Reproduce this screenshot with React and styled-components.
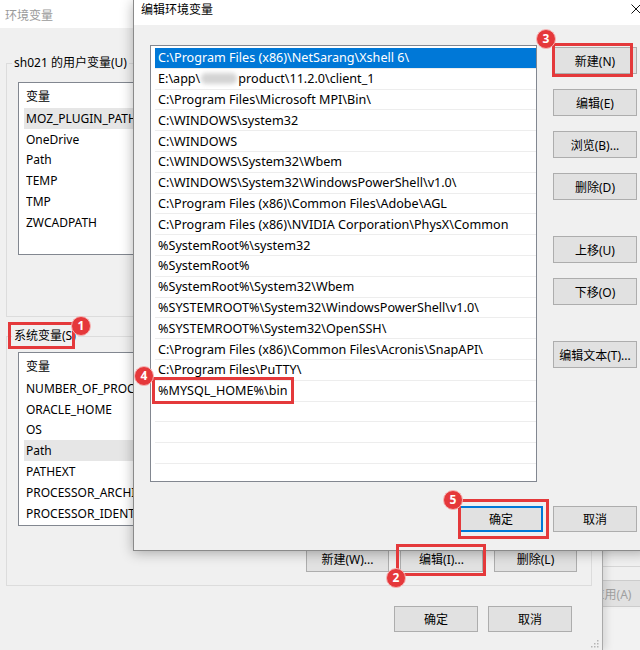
import React from "react";
import styled, { createGlobalStyle } from "styled-components";

const GlobalStyle = createGlobalStyle`
  *, *::before, *::after { box-sizing: border-box; }
  html, body { margin: 0; padding: 0; background: #f0f0f0; overflow: hidden; }
  body { font-family: "Noto Sans", "Noto Sans CJK SC", sans-serif; color: #000; }
`;

const Desktop = styled.div`
  position: relative;
  width: 640px;
  height: 650px;
  overflow: hidden;
  background: #f0f0f0;
`;

/* ---------- window furthest back (系统属性) ---------- */
const BackWindow = styled.div`
  position: absolute;
  left: 560px;
  top: 551px;
  width: 120px;
  height: 120px;
  background: #f0f0f0;
  display: flex;
  flex-direction: column;
  padding-top: 15px;
`;
const BackDivider = styled.div`
  height: 1px;
  background: #d6d6d6;
`;
const BackButton = styled.div`
  margin: 13px 0 0 10px;
  width: 84px;
  height: 27px;
  background: #e1e1e1;
  border: 1px solid #cccccc;
  color: #a0a0a0;
  font-size: 12px;
  display: flex;
  align-items: center;
  justify-content: center;
`;
const BackPanel = styled.div`
  margin-top: 2px;
  flex: 1;
  background: linear-gradient(to right, #e2e2e2 0, #e2e2e2 18px, #f2f2f2 18px);
`;

/* ---------- 环境变量 dialog ---------- */
const EnvDialog = styled.div`
  position: absolute;
  left: 0;
  top: 0;
  width: 603px;
  height: 650px;
  background: #f0f0f0;
  border-right: 1px solid #a9a9a9;
  box-shadow: 3px 0 8px rgba(0, 0, 0, 0.12);
  display: flex;
  flex-direction: column;
`;
const EnvTitle = styled.div`
  height: 28px;
  background: #ffffff;
  color: #9a9a9a;
  font-size: 12px;
  display: flex;
  align-items: center;
  padding: 2px 0 0 5px;
`;
const EnvBody = styled.div`
  padding: 27px 10px 0 6px;
  display: flex;
  flex-direction: column;
`;
const Group = styled.fieldset`
  margin: ${(p) => p.$top}px 0 0 0;
  padding: 0 14px ${(p) => p.$bottom}px 11px;
  border: 1px solid #dcdcdc;
  min-width: 0;
`;
const Legend = styled.legend`
  font-size: 12px;
  line-height: 16px;
  padding: 0 2px;
  margin-left: -6px;
`;
const VarList = styled.div`
  margin-top: ${(p) => p.$top}px;
  height: ${(p) => p.$h}px;
  background: #ffffff;
  border: 1px solid #828790;
  overflow: hidden;
  display: flex;
  flex-direction: column;
`;
const VarHeader = styled.div`
  height: 25px;
  flex: none;
  display: flex;
  align-items: center;
  padding-left: 7px;
  font-size: 12px;
`;
const VarRow = styled.div`
  height: 20.8px;
  flex: none;
  margin-left: 5px;
  padding-left: 2px;
  display: flex;
  align-items: center;
  font-size: 12px;
  white-space: nowrap;
  background: ${(p) => (p.$selected ? "#e6e6e6" : "transparent")};
`;
const NameCell = styled.span`
  width: 107px;
  flex: none;
  overflow: hidden;
`;
const GroupButtons = styled.div`
  margin-top: 20px;
  display: flex;
  justify-content: flex-end;
  gap: 11px;
`;
const WinButton = styled.div`
  width: ${(p) => p.$w || 84}px;
  height: ${(p) => p.$h || 27}px;
  flex: none;
  background: #e1e1e1;
  border: ${(p) => (p.$default ? "2px solid #0078d7" : "1px solid #adadad")};
  font-size: 12px;
  display: flex;
  align-items: center;
  justify-content: center;
  white-space: nowrap;
`;
const DialogButtons = styled.div`
  margin-top: 20px;
  padding-right: 20px;
  display: flex;
  justify-content: flex-end;
  gap: 10px;
`;
const Grip = styled.svg`
  position: absolute;
  right: 3px;
  bottom: 2px;
`;

/* ---------- 编辑环境变量 dialog ---------- */
const EditDialog = styled.div`
  position: absolute;
  left: 133px;
  top: 0;
  width: 515px;
  height: 551px;
  background: #f0f0f0;
  border: 1px solid #8a8a8a;
  border-top: none;
  box-shadow: 0 2px 12px rgba(0, 0, 0, 0.3);
  display: flex;
  flex-direction: column;
`;
const EditTitle = styled.div`
  height: 25px;
  background: #ffffff;
  display: flex;
  justify-content: space-between;
  align-items: flex-start;
  padding: 2px 6px 0 7px;
  font-size: 12px;
  line-height: 16px;
`;
const CloseIcon = styled.svg`
  margin-top: 2px;
`;
const EditBody = styled.div`
  padding: 20px 0 0 16px;
  display: grid;
  grid-template-columns: 387px 84px;
  column-gap: 16px;
  row-gap: 24px;
  align-items: start;
`;
const PathList = styled.div`
  height: 437px;
  background: #ffffff;
  border: 1px solid #828790;
  padding: 2px 0 0 4px;
  overflow: hidden;
`;
const PathRow = styled.div`
  height: 20.8px;
  padding-left: 3px;
  border-bottom: 1px solid #ededed;
  display: flex;
  align-items: center;
  font-size: 12.6px;
  white-space: nowrap;
  background: ${(p) => (p.$selected ? "#0078d7" : "transparent")};
  color: ${(p) => (p.$selected ? "#ffffff" : "#000000")};
`;
const Redacted = styled.span`
  display: inline-block;
  width: 36px;
  height: 11px;
  margin: 0 1px;
  border-radius: 5px;
  background: #d4d4d4;
  filter: blur(2px);
`;
const SideButtons = styled.div`
  padding-top: 2px;
  display: flex;
  flex-direction: column;
  gap: 15px;
`;
const SideButton = styled(WinButton)`
  margin-top: ${(p) => (p.$extra ? 21 : 0)}px;
`;
const BottomButtons = styled.div`
  grid-column: 1 / -1;
  display: flex;
  justify-content: flex-end;
  gap: 10px;
`;

/* ---------- annotation overlay ---------- */
const Overlay = styled.div`
  position: absolute;
  inset: 0;
  pointer-events: none;
`;
const RedBox = styled.div`
  position: absolute;
  left: ${(p) => p.$x}px;
  top: ${(p) => p.$y}px;
  width: ${(p) => p.$w}px;
  height: ${(p) => p.$h}px;
  border: 3px solid #e4393b;
`;
const Badge = styled.div`
  position: absolute;
  left: ${(p) => p.$x - 10}px;
  top: ${(p) => p.$y - 10}px;
  width: 20px;
  height: 20px;
  border-radius: 50%;
  background: #e5383b;
  border: 1px solid #f6b5b5;
  color: #ffffff;
  font: 700 12px/18px "Noto Sans", sans-serif;
  text-align: center;
`;

const userVars = ["MOZ_PLUGIN_PATH", "OneDrive", "Path", "TEMP", "TMP", "ZWCADPATH"];
const sysVars = [
  "NUMBER_OF_PROCESSORS",
  "ORACLE_HOME",
  "OS",
  "Path",
  "PATHEXT",
  "PROCESSOR_ARCHITECTURE",
  "PROCESSOR_IDENTIFIER",
];
const paths = [
  "C:\\Program Files (x86)\\NetSarang\\Xshell 6\\",
  "REDACTED",
  "C:\\Program Files\\Microsoft MPI\\Bin\\",
  "C:\\WINDOWS\\system32",
  "C:\\WINDOWS",
  "C:\\WINDOWS\\System32\\Wbem",
  "C:\\WINDOWS\\System32\\WindowsPowerShell\\v1.0\\",
  "C:\\Program Files (x86)\\Common Files\\Adobe\\AGL",
  "C:\\Program Files (x86)\\NVIDIA Corporation\\PhysX\\Common",
  "%SystemRoot%\\system32",
  "%SystemRoot%",
  "%SystemRoot%\\System32\\Wbem",
  "%SYSTEMROOT%\\System32\\WindowsPowerShell\\v1.0\\",
  "%SYSTEMROOT%\\System32\\OpenSSH\\",
  "C:\\Program Files (x86)\\Common Files\\Acronis\\SnapAPI\\",
  "C:\\Program Files\\PuTTY\\",
  "%MYSQL_HOME%\\bin",
  "",
  "",
  "",
  "",
  "",
];

export default function App() {
  return (
    <>
      <GlobalStyle />
      <Desktop>
        <BackWindow>
          <BackDivider />
          <BackButton>应用(A)</BackButton>
          <BackPanel />
        </BackWindow>

        <EnvDialog>
          <EnvTitle>环境变量</EnvTitle>
          <EnvBody>
            <Group $top={0} $bottom={61}>
              <Legend>sh021 的用户变量(U)</Legend>
              <VarList $top={11} $h={173}>
                <VarHeader>变量</VarHeader>
                {userVars.map((v, i) => (
                  <VarRow key={v} $selected={i === 0}>
                    <NameCell>{v}</NameCell>
                  </VarRow>
                ))}
              </VarList>
            </Group>
            <Group $top={11} $bottom={13}>
              <Legend>系统变量(S)</Legend>
              <VarList $top={8} $h={174}>
                <VarHeader>变量</VarHeader>
                {sysVars.map((v, i) => (
                  <VarRow key={v} $selected={i === 3}>
                    <NameCell>{v}</NameCell>
                  </VarRow>
                ))}
              </VarList>
              <GroupButtons>
                <WinButton $w={83} $h={26}>新建(W)...</WinButton>
                <WinButton $w={83} $h={26}>编辑(I)...</WinButton>
                <WinButton $w={83} $h={26}>删除(L)</WinButton>
              </GroupButtons>
            </Group>
            <DialogButtons>
              <WinButton $h={26}>确定</WinButton>
              <WinButton $h={26}>取消</WinButton>
            </DialogButtons>
          </EnvBody>
          <Grip width="8" height="8" viewBox="0 0 8 8">
            <g fill="#b5b5b5">
              <rect x="6" y="0" width="1.5" height="1.5" />
              <rect x="3" y="3" width="1.5" height="1.5" />
              <rect x="6" y="3" width="1.5" height="1.5" />
              <rect x="0" y="6" width="1.5" height="1.5" />
              <rect x="3" y="6" width="1.5" height="1.5" />
              <rect x="6" y="6" width="1.5" height="1.5" />
            </g>
          </Grip>
        </EnvDialog>

        <EditDialog>
          <EditTitle>
            <span>编辑环境变量</span>
            <CloseIcon width="10" height="10" viewBox="0 0 10 10">
              <path d="M0.5 0.5 L9.5 9.5 M9.5 0.5 L0.5 9.5" stroke="#111" strokeWidth="1" fill="none" />
            </CloseIcon>
          </EditTitle>
          <EditBody>
            <PathList>
              {paths.map((p, i) => (
                <PathRow key={i} $selected={i === 0}>
                  {p === "REDACTED" ? (
                    <>
                      E:\app\<Redacted />product\11.2.0\client_1
                    </>
                  ) : (
                    p
                  )}
                </PathRow>
              ))}
            </PathList>
            <SideButtons>
              <SideButton>新建(N)</SideButton>
              <SideButton>编辑(E)</SideButton>
              <SideButton>浏览(B)...</SideButton>
              <SideButton>删除(D)</SideButton>
              <SideButton $extra>上移(U)</SideButton>
              <SideButton>下移(O)</SideButton>
              <SideButton $extra>编辑文本(T)...</SideButton>
            </SideButtons>
            <BottomButtons>
              <WinButton $default $h={26}>确定</WinButton>
              <WinButton $h={26}>取消</WinButton>
            </BottomButtons>
          </EditBody>
        </EditDialog>

        <Overlay>
          <RedBox $x={8} $y={322} $w={67} $h={27} />
          <Badge $x={81} $y={326}>1</Badge>
          <RedBox $x={396} $y={544} $w={90} $h={32} />
          <Badge $x={396} $y={578}>2</Badge>
          <RedBox $x={552} $y={43} $w={81} $h={34} />
          <Badge $x={546} $y={39}>3</Badge>
          <RedBox $x={152} $y={377} $w={142} $h={27} />
          <Badge $x={144} $y={376}>4</Badge>
          <RedBox $x={458} $y={499} $w={91} $h={40} />
          <Badge $x={453} $y={500}>5</Badge>
        </Overlay>
      </Desktop>
    </>
  );
}
